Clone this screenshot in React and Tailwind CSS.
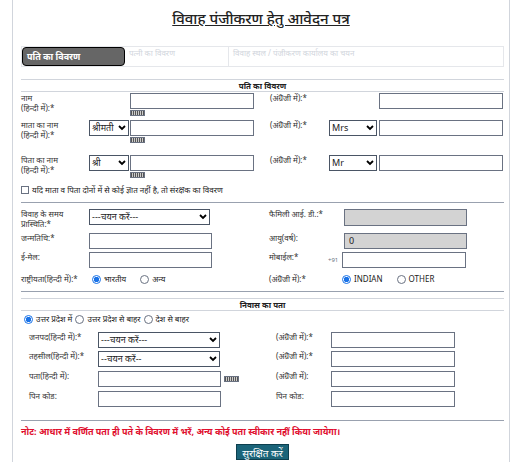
import React from 'react'

const Kb = () => (
  <div className="w-[15px] h-[6px] bg-[repeating-linear-gradient(90deg,#555_0_1px,#ccc_1px_2px)] border border-gray-500" />
)

const Input = ({ w = 'w-[124px]', grey, value = '' }) => (
  <div className={`${w} h-[16px] border border-gray-500 ${grey ? 'bg-[#d3d3d3]' : 'bg-white'} text-[9px] pl-1 leading-[14px]`}>{value}</div>
)

const Select = ({ w, text }) => (
  <div className={`${w} h-[16px] border border-gray-600 bg-white flex items-center justify-between px-[2px] text-[9px]`}>
    <span>{text}</span>
    <svg width="8" height="6" viewBox="0 0 8 6"><path d="M1 1l3 3 3-3" stroke="#000" strokeWidth="1.8" fill="none" /></svg>
  </div>
)

const Radio = ({ on }) => (
  <span className={`inline-block w-[9px] h-[9px] rounded-full border ${on ? 'border-[#1a73e8] bg-[radial-gradient(circle,#1a73e8_0_2.5px,white_3px)]' : 'border-gray-500 bg-white'}`} />
)

const Lbl = ({ children, w = 'w-[68px]' }) => <div className={`${w} text-[8px] leading-[10px] text-[#333]`}>{children}</div>

export default function App() {
  return (
    <div className="w-[515px] h-[468px] bg-white overflow-hidden font-['Noto_Sans','Liberation_Sans',sans-serif] text-[#222]">
      <div className="ml-[12px] w-[498px] h-[462px] border-x border-gray-300 px-[8px]">
        <div className="text-center pt-[6px] h-[40px]">
          <span className="text-[15px] underline font-medium">विवाह पंजीकरण हेतु आवेदन पत्र</span>
        </div>
        <div className="flex h-[21px] mt-[6px] w-[483px] border border-gray-200 text-[8px]">
          <div className="w-[103px] bg-[#666] text-white font-bold text-[9px] flex items-center pl-[4px] rounded-sm border border-black">पति का विवरण</div>
          <div className="w-[104px] text-gray-300 pl-[4px] border-r border-gray-200">पत्नी का विवरण</div>
          <div className="flex-1 text-gray-300 pl-[4px]">विवाह स्थल / पंजीकरण कार्यालय का चयन</div>
        </div>
        <div className="mt-[12px] w-[483px] border-t border-gray-300 border-b text-center text-[8px] font-bold h-[13px] leading-[12px]">पति का विवरण</div>
        <div className="w-[483px] text-[8px]">
          {[
            ['नाम', null, null],
            ['माता का नाम', 'श्रीमती', 'Mrs'],
            ['पिता का नाम', 'श्री', 'Mr'],
          ].map(([l, s, e], i) => (
            <div key={i} className={`flex ${i === 0 ? 'h-[27px]' : i === 1 ? 'h-[35px] mt-[0px]' : 'h-[34px]'} ${i ? 'pt-[1px]' : 'pt-[1px]'}`}>
              <Lbl>{l}<br />(हिन्दी में):*</Lbl>
              <div className="w-[41px]">{s && <Select w="w-[40px]" text={s} />}</div>
              <div className="w-[140px] flex flex-col gap-[1px]">
                <Input />
                <Kb />
              </div>
              <Lbl w="w-[59px]">(अंग्रेजी में):*</Lbl>
              <div className="w-[50px]">{e && <Select w="w-[48px]" text={e} />}</div>
              <Input />
            </div>
          ))}
          <div className="flex items-center gap-[3px] h-[14px] -mt-[5px]">
            <span className="w-[8px] h-[8px] border border-gray-500" />
            <span className="text-[8px]">यदि माता व पिता दोनों में से कोई ज्ञात नहीं है, तो संरक्षक का विवरण</span>
          </div>
          <div className="border-t border-gray-400 mt-[5px] pt-[6px] flex flex-col gap-[3px]">
            <div className="flex h-[21px]">
              <Lbl>विवाह के समय<br />प्रास्थिति:*</Lbl>
              <Select w="w-[121px]" text="---चयन करें---" />
              <Lbl w="w-[59px] ml-[59px]">फैमिली आई. डी.:*</Lbl>
              <Input grey w="w-[123px] ml-[16px] h-[17px]" />
            </div>
            <div className="flex h-[16px]">
              <Lbl>जन्मतिथि:*</Lbl>
              <Input w="w-[123px]" />
              <Lbl w="w-[59px] ml-[57px]">आयु(वर्ष):</Lbl>
              <Input grey w="w-[123px] ml-[16px]" value="0" />
            </div>
            <div className="flex h-[16px]">
              <Lbl>ई-मेल:</Lbl>
              <Input w="w-[123px]" />
              <Lbl w="w-[59px] ml-[57px]">मोबाईल:*</Lbl>
              <span className="w-[14px] text-[6px] pt-[4px] text-gray-500">+91</span>
              <Input w="w-[124px]" />
            </div>
            <div className="flex h-[16px] items-center text-[8px]">
              <Lbl>राष्ट्रीयता(हिन्दी में):*</Lbl>
              <div className="w-[180px] flex items-center gap-[3px] pl-[3px]"><Radio on /> भारतीय <span className="ml-[8px]" /><Radio /> अन्य</div>
              <Lbl w="w-[73px]">(अंग्रेजी में):*</Lbl>
              <div className="flex items-center gap-[3px] font-['Liberation_Serif',serif] text-[8px]"><Radio on /> INDIAN <span className="ml-[8px]" /><Radio /> OTHER</div>
            </div>
          </div>
          <div className="border-t border-gray-400 mt-[4px] h-[7px]" />
          <div className="border-t border-b border-gray-300 text-center text-[8px] font-bold h-[13px] leading-[12px]">निवास का पता</div>
          <div className="flex items-center gap-[3px] h-[16px] pl-[3px] text-[8px]">
            <Radio on /> उत्तर प्रदेश में <Radio /> उत्तर प्रदेश से बाहर <Radio /> देश से बाहर
          </div>
          <div className="pl-[8px] pt-[5px] flex flex-col gap-[3px]">
            {[
              ['जनपद(हिन्दी में):*', 'sel', '---चयन करें---', '(अंग्रेजी में):*'],
              ['तहसील(हिन्दी में):*', 'sel', '--चयन करें--', '(अंग्रेजी में):*'],
              ['पता(हिन्दी में):', 'kb', '', '(अंग्रेजी में):'],
              ['पिन कोड:', '', '', 'पिन कोड:'],
            ].map(([l, t, s, r], i) => (
              <div key={i} className={`flex ${i > 1 ? 'h-[16px] mt-[1px]' : 'h-[16px]'}`}>
                <Lbl w="w-[69px]">{l}</Lbl>
                <div className="w-[178px] flex items-center gap-[3px]">
                  {t === 'sel' ? <Select w="w-[122px]" text={s} /> : <Input w="w-[123px]" />}
                  {t === 'kb' && <Kb />}
                </div>
                <Lbl w="w-[55px]">{r}</Lbl>
                <Input w="w-[124px]" />
              </div>
            ))}
          </div>
          <div className="border-t border-gray-400 mt-[13px] pt-[4px] text-[9px] font-bold text-[#e0102f]">
            नोट:  आधार में वर्णित पता ही पते के विवरण में भरें, अन्य कोई पता स्वीकार नहीं किया जायेगा।
          </div>
          <div className="flex justify-center mt-[5px]">
            <div className="bg-[#1b6479] text-white text-[10px] px-[5px] h-[16px] leading-[16px] border border-[#0d3f4e]">सुरक्षित करें</div>
          </div>
        </div>
      </div>
    </div>
  )
}
